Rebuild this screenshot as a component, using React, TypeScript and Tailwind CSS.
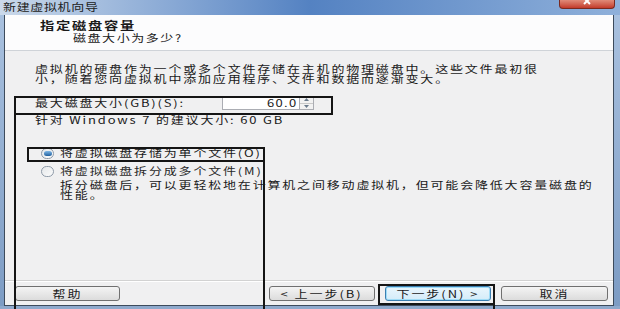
import type { ReactNode } from 'react';

const cjk = { fontFamily: '"Noto Sans CJK SC", "Liberation Sans", sans-serif' };

// the screenshot is stretched sideways, so the glyphs are too
const Wide = ({ children, right }: { children: ReactNode; right?: boolean }) => (
  <span className={`inline-block whitespace-nowrap scale-x-[1.3] ${right ? 'origin-right' : 'origin-left'}`}>{children}</span>
);

const Radio = ({ checked }: { checked?: boolean }) => (
  <span className="w-[13px] h-[11px] rounded-full border border-[#8e9aa8] bg-gradient-to-br from-[#e4e7ea] to-[#fbfbfb] flex items-center justify-center shrink-0">
    {checked && <span className="w-[8px] h-[5px] rounded-full bg-gradient-to-b from-[#7fb8e6] to-[#1e5f9e]" />}
  </span>
);

const Btn = ({ label, focus, w }: { label: string; focus?: boolean; w: string }) => (
  <div
    className={`${w} h-[15px] rounded-[3px] border flex items-center justify-center text-[10px] leading-none tracking-[1.5px] text-[#1a1a1a] ${
      focus
        ? 'border-[#3c7fb1] shadow-[inset_0_0_0_1px_#9fdcf7] bg-gradient-to-b from-[#eaf6fd] to-[#d4ecf9]'
        : 'border-[#707070] bg-gradient-to-b from-[#f4f4f4] to-[#dcdcdc]'
    }`}
  >
    <span className="inline-block scale-x-[1.3] origin-center whitespace-nowrap">{label}</span>
  </div>
);

export default function App() {
  return (
    <div className="relative w-[620px] h-[309px] overflow-hidden flex flex-col bg-[#c3d4e8] text-[#1a1a1a]" style={cjk}>
      {/* title bar */}
      <div className="h-[15px] flex items-start justify-between bg-gradient-to-r from-[#cbd9ea] via-[#5482c2] to-[#8fb0da]">
        <span className="pl-[3px] text-[10px] leading-[14px] tracking-[0.5px] text-[#222]">
          <Wide>新建虚拟机向导</Wide>
        </span>
        <div className="mr-[5px] w-[56px] h-[9px] rounded-b-[4px] bg-gradient-to-b from-[#e08a78] to-[#c2392a] border border-t-0 border-[#7a2a20] flex justify-center items-start">
          <svg width="10" height="5" viewBox="0 0 10 5">
            <path d="M2 -2 L8 4 M8 -2 L2 4" stroke="#fff" strokeWidth="2" />
          </svg>
        </div>
      </div>

      <div className="flex-1 flex">
        <div className="w-[4px] bg-gradient-to-b from-[#a9c1df] to-[#7d9cc4]" />
        <div className="flex-1 flex flex-col border-x border-[#3d4b5c]">
          {/* header */}
          <div className="h-[36px] bg-[#fcfcfd] border-b border-[#cfd3d8] pt-[5px]">
            <div className="pl-[35px] text-[11px] leading-[11px] font-bold tracking-[1.3px]">
              <Wide>指定磁盘容量</Wide>
            </div>
            <div className="pl-[68px] mt-[1px] text-[10px] leading-[11px] tracking-[1.2px]">
              <Wide>磁盘大小为多少?</Wide>
            </div>
          </div>

          {/* body */}
          <div className="h-[229px] bg-[#f0f0f1] pl-[30px] text-[10px] leading-[10px] tracking-[1.4px]">
            <div className="mt-[13px]">
              <Wide>虚拟机的硬盘作为一个或多个文件存储在主机的物理磁盘中。这些文件最初很</Wide>
              <br />
              <Wide>小，随着您向虚拟机中添加应用程序、文件和数据而逐渐变大。</Wide>
            </div>
            <div className="mt-[12px] h-[14px] flex items-center">
              <span className="w-[187px]">
                <Wide>最大磁盘大小(GB)(S):</Wide>
              </span>
              <div className="w-[78px] h-[14px] bg-white border border-[#abadb3] flex items-center justify-end pr-[2px] tracking-[1px]">
                <Wide right>60.0</Wide>
              </div>
              <div className="w-[14px] h-[14px] border border-l-0 border-[#abadb3] bg-[#f2f2f2] flex flex-col">
                <div className="flex-1 border-b border-[#c9c9c9] flex items-center justify-center">
                  <svg width="5" height="3" viewBox="0 0 5 3"><path d="M0 3 L2.5 0 L5 3Z" fill="#6a7b8c" /></svg>
                </div>
                <div className="flex-1 flex items-center justify-center">
                  <svg width="5" height="3" viewBox="0 0 5 3"><path d="M0 0 L2.5 3 L5 0Z" fill="#6a7b8c" /></svg>
                </div>
              </div>
            </div>
            <div className="mt-[5px]">
              <Wide>针对 Windows 7 的建议大小: 60 GB</Wide>
            </div>

            <div className="mt-[22px] pl-[6px] h-[12px] flex items-center gap-[6px]">
              <Radio checked />
              <Wide>将虚拟磁盘存储为单个文件(O)</Wide>
            </div>
            <div className="mt-[6px] pl-[6px] h-[12px] flex items-center gap-[6px] text-[#2a2a2a]">
              <Radio />
              <Wide>将虚拟磁盘拆分成多个文件(M)</Wide>
            </div>
            <div className="mt-[3px] pl-[25px]">
              <Wide>拆分磁盘后，可以更轻松地在计算机之间移动虚拟机，但可能会降低大容量磁盘的</Wide>
              <br />
              <Wide>性能。</Wide>
            </div>
          </div>

          {/* footer */}
          <div className="flex-1 bg-[#f0f0f1] border-t border-[#d2d2d2] shadow-[inset_0_1px_0_#ffffff] pt-[5px] pl-[10px] pr-[5px] flex items-start">
            <Btn label="帮助" w="w-[105px]" />
            <div className="flex-1" />
            <div className="flex gap-[10px]">
              <Btn label="< 上一步(B)" w="w-[106px]" />
              <Btn label="下一步(N) >" w="w-[106px]" focus />
              <Btn label="取消" w="w-[107px]" />
            </div>
          </div>
          <div className="h-[1px] bg-[#3d4b5c]" />
        </div>
        <div className="w-[6px] bg-gradient-to-b from-[#a9c1df] to-[#7d9cc4]" />
      </div>
      <div className="h-[3px] bg-[#8ea9cc]" />

      {/* annotation overlays */}
      <div className="absolute left-[14px] top-[96px] w-[319px] h-[19px] border-2 border-[#151515]" />
      <div className="absolute left-[14px] top-[96px] w-[2px] h-[213px] bg-[#151515]" />
      <div className="absolute left-[27px] top-[147px] w-[238px] h-[15px] border-2 border-[#151515]" />
      <div className="absolute left-[263px] top-[147px] w-[2px] h-[162px] bg-[#151515]" />
      <div className="absolute left-[378px] top-[284px] w-[117px] h-[21px] border-2 border-[#151515]" />
      <div className="absolute left-[493px] top-[284px] w-[2px] h-[25px] bg-[#151515]" />
    </div>
  );
}
